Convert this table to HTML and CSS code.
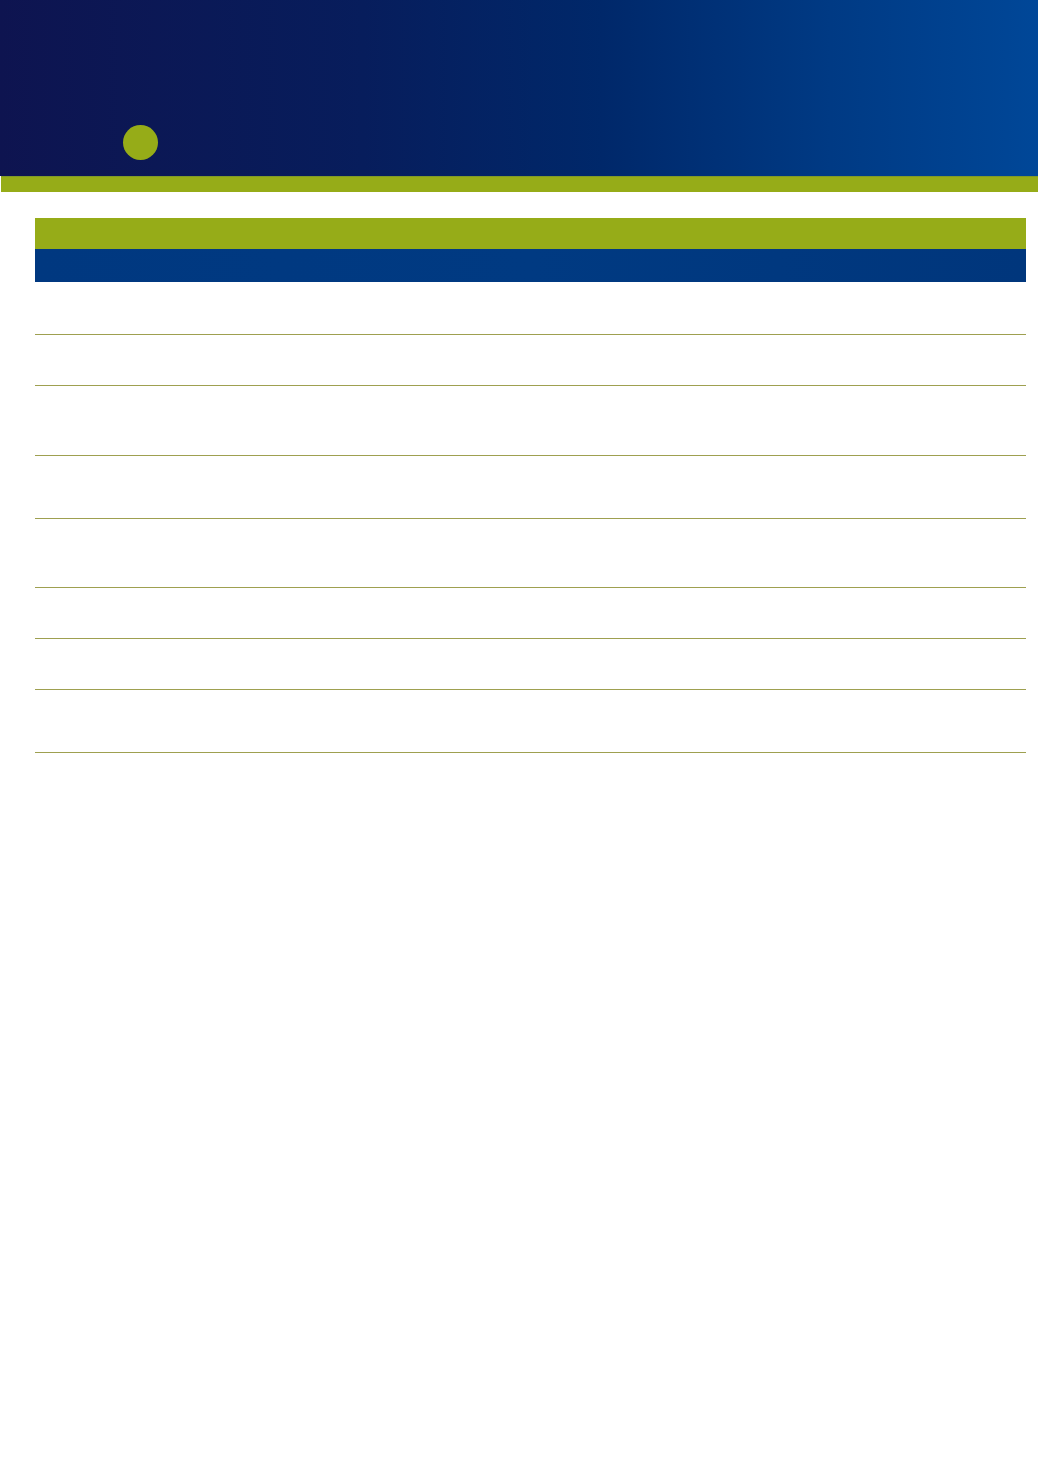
FILE: index.html
```html
<!DOCTYPE html>
<html>
<head>
<meta charset="utf-8">
<link rel="stylesheet" href="styles.css">
</head>
<body>
<header class="banner">
  <div class="dot"></div>
</header>
<div class="accent"></div>
<div class="table">
  <div class="row head-green"></div>
  <div class="row head-blue"></div>
  <div class="row r52"></div>
  <div class="row r51"></div>
  <div class="row r70"></div>
  <div class="row r63"></div>
  <div class="row r69"></div>
  <div class="row r51"></div>
  <div class="row r51"></div>
  <div class="row r63"></div>
</div>
</body>
</html>
```

FILE: styles.css
```css
html, body {
  margin: 0;
  padding: 0;
  background: #ffffff;
  font-family: "Liberation Sans", Arial, sans-serif;
}
.banner {
  height: 176px;
  box-sizing: border-box;
  padding: 125px 0 0 123px;
  background: linear-gradient(90deg, #0e1450 0%, #071d5c 35%, #00286a 58%, #003a84 80%, #004798 100%);
}
.dot {
  width: 35px;
  height: 35px;
  border-radius: 50%;
  background: #96ac18;
}
.accent {
  height: 16px;
  margin-left: 1px;
  background: #96ac18;
  border-top: 1px solid #7f9a28;
  box-sizing: border-box;
}
.table {
  margin: 26px 12px 0 35px;
  display: flex;
  flex-direction: column;
}
.row {
  box-sizing: border-box;
  border-bottom: 1px solid #9ea050;
}
.head-green {
  height: 31px;
  background: #96ac18;
  border-bottom: none;
}
.head-blue {
  height: 33px;
  background: linear-gradient(90deg, #003880 0%, #003a82 50%, #00367c 100%);
  border-bottom: none;
}
.r52 { height: 53px; }
.r51 { height: 51px; }
.r70 { height: 70px; }
.r63 { height: 63px; }
.r69 { height: 69px; }
```
